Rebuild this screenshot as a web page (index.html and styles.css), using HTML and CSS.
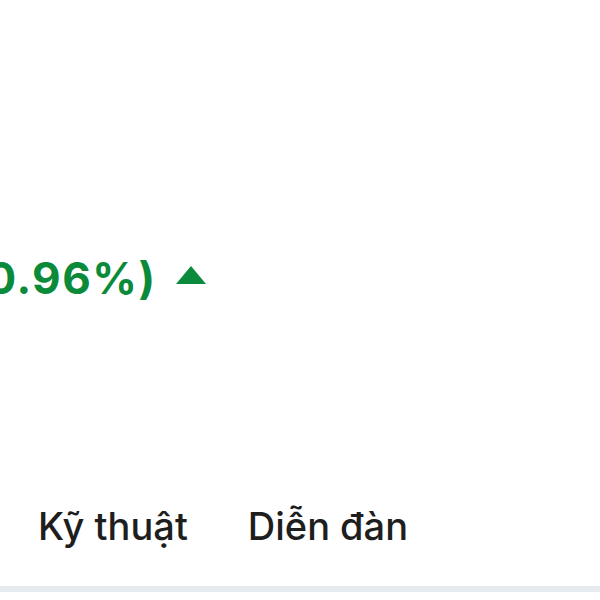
FILE: index.html
```html
<!DOCTYPE html>
<html lang="vi">
<head>
<meta charset="utf-8">
<link rel="stylesheet" href="styles.css">
</head>
<body>
<div class="page">
  <div class="quote">
    <div class="change-box"><span class="change">+12.34 (0.96%)</span></div>
    <svg class="arrow" width="30" height="18" viewBox="0 0 30 18"><polygon points="15,0 30,18 0,18" fill="#0a8a3a"/></svg>
  </div>
  <nav class="tabs">
    <span class="tab">Kỹ thuật</span>
    <span class="tab">Diễn đàn</span>
  </nav>
  <div class="rule"></div>
</div>
</body>
</html>
```
FILE: styles.css
```css
html, body { margin: 0; padding: 0; background: #fff; }
body { font-family: Inter, "Noto Sans", sans-serif; width: 600px; height: 600px; overflow: hidden; }
.page { display: flex; flex-direction: column; }
.quote { display: flex; align-items: center; gap: 21px; height: 50px; margin-top: 253px; white-space: nowrap; }
.change-box { width: 155px; flex: none; display: flex; justify-content: flex-end; }
.change { color: #0b8a3a; font-weight: 700; font-size: 44px; letter-spacing: 1.5px; margin-right: -1.5px; line-height: 50px; white-space: nowrap; flex: none; }
.arrow { flex: none; margin-top: -6px; }
.tabs { display: flex; gap: 60px; padding-left: 38px; margin-top: 195px; height: 56px; align-items: center; }
.tab { font-size: 38px; font-weight: 500; color: #1e1e1e; line-height: 56px; }
.rule { height: 6px; background: #e5eaef; margin-top: 32px; }
```
